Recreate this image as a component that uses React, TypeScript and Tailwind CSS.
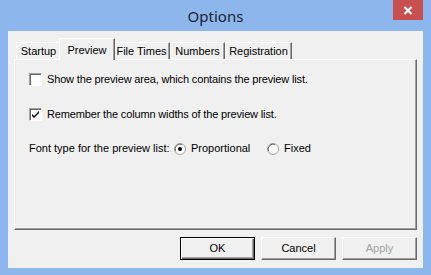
import React from "react";

const font = { fontFamily: '"Liberation Sans", Arial, sans-serif' };

function Tab({ label, selected, w }: { label: string; selected?: boolean; w: number }) {
  if (selected) {
    return (
      <div
        className="relative z-10 -mx-[2px] h-[22px] self-start border-l border-t border-r border-l-white border-t-white border-r-[#696969] bg-[#f0f0f0] flex items-start justify-center pt-[3px] text-[11px] whitespace-nowrap text-black shadow-[inset_-1px_0_0_#a0a0a0]"
        style={{ width: w + 4 }}
      >
        {label}
      </div>
    );
  }
  return (
    <div
      className="mt-[4px] h-[17px] border-l border-t border-r border-l-white border-t-white border-r-[#696969] flex items-center justify-center text-[11px] whitespace-nowrap text-black shadow-[inset_-1px_0_0_#a0a0a0]"
      style={{ width: w }}
    >
      {label}
    </div>
  );
}

function Checkbox({ checked }: { checked?: boolean }) {
  return (
    <div className="w-[13px] h-[13px] shrink-0 border border-t-[#a0a0a0] border-l-[#a0a0a0] border-r-white border-b-white bg-white shadow-[inset_1px_1px_0_#696969] flex items-center justify-center">
      {checked && (
        <svg width="9" height="9" viewBox="0 0 9 9">
          <path d="M1 4 L3 6 L8 1 L8 3 L3 8 L1 6 Z" fill="#000" />
        </svg>
      )}
    </div>
  );
}

function Radio({ checked }: { checked?: boolean }) {
  return (
    <svg width="12" height="12" viewBox="0 0 12 12" className="shrink-0">
      <circle cx="6" cy="6" r="5.5" fill="#fff" stroke="#a0a0a0" />
      <path d="M1.5 8 A5 5 0 0 1 8 1.5" fill="none" stroke="#696969" strokeWidth="1" />
      {checked && <circle cx="6" cy="6" r="2" fill="#000" />}
    </svg>
  );
}

function Button({ label, def, disabled }: { label: string; def?: boolean; disabled?: boolean }) {
  return (
    <div
      className={
        "w-[75px] h-[23px] flex items-center justify-center text-[11px] bg-[#f0f0f0] " +
        (def
          ? "border border-[#000] shadow-[inset_1px_1px_0_#fff,inset_-1px_-1px_0_#696969,inset_-2px_-2px_0_#a0a0a0]"
          : "border border-t-white border-l-white border-r-[#696969] border-b-[#696969] shadow-[inset_-1px_-1px_0_#a0a0a0]") +
        (disabled ? " text-[#a0a0a0]" : " text-black")
      }
    >
      {label}
    </div>
  );
}

export default function App() {
  return (
    <div className="w-[431px] h-[275px] bg-[#8db6ec] flex flex-col" style={font}>
      <div className="relative h-[31px] flex items-start justify-center pt-[5px]">
        <span className="text-[15px] text-[#1a2433]" style={{ fontFamily: '"Noto Sans", "Liberation Sans", sans-serif' }}>
          Options
        </span>
        <div className="absolute right-[8px] top-0 w-[30px] h-[20px] bg-[#c75050] flex items-center justify-center">
          <svg width="10" height="9" viewBox="0 0 10 9">
            <path d="M1.5 1 L8.5 8 M8.5 1 L1.5 8" stroke="#fff" strokeWidth="2" />
          </svg>
        </div>
      </div>
      <div className="mx-[8px] mb-[7px] flex-1 bg-[#f0f0f0] flex flex-col px-[6px]">
        <div className="flex items-start pl-[2px] pt-[7px] h-[28px]">
          <Tab label="Startup" w={45} />
          <Tab label="Preview" selected w={52} />
          <Tab label="File Times" w={57} />
          <Tab label="Numbers" w={55} />
          <Tab label="Registration" w={67} />
        </div>
        <div className="h-[171px] border border-t-white border-l-white border-r-[#696969] border-b-[#696969] shadow-[inset_-1px_-1px_0_#a0a0a0] flex flex-col pl-[14px] pt-[13px] text-[11px] text-black whitespace-nowrap">
          <div className="flex items-center gap-[5px] h-[13px]">
            <Checkbox />
            <span className="tracking-[-0.15px]">Show the preview area, which contains the preview list.</span>
          </div>
          <div className="flex items-center gap-[5px] h-[13px] mt-[22px]">
            <Checkbox checked />
            <span className="tracking-[-0.15px]">Remember the column widths of the preview list.</span>
          </div>
          <div className="flex items-center h-[13px] mt-[21px]">
            <span className="w-[145px]">Font type for the preview list:</span>
            <Radio checked />
            <span className="ml-[5px] w-[76px]">Proportional</span>
            <Radio />
            <span className="ml-[5px]">Fixed</span>
          </div>
        </div>
        <div className="flex justify-end gap-[6px] mt-[7px]">
          <Button label="OK" def />
          <Button label="Cancel" />
          <Button label="Apply" disabled />
        </div>
      </div>
    </div>
  );
}
